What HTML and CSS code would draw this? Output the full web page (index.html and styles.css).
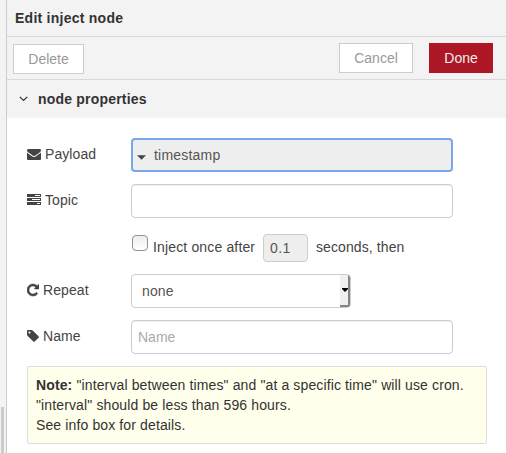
FILE: index.html
```html
<!DOCTYPE html>
<html lang="en">
<head>
<meta charset="utf-8">
<title>Edit inject node</title>
<link rel="stylesheet" href="styles.css">
</head>
<body>
<div class="gutter"><div class="scroll-thumb"></div></div>
<main class="tray">
  <header class="tray-header">Edit inject node</header>
  <div class="toolbar">
    <button class="btn btn-delete">Delete</button>
    <button class="btn btn-cancel">Cancel</button>
    <button class="btn btn-done">Done</button>
  </div>
  <div class="section-header">
    <svg class="chevron" width="9" height="6" viewBox="0 0 9 6"><path d="M.8 .9 4.5 4.5 8.2 .9" fill="none" stroke="currentColor" stroke-width="1.2"/></svg>
    <span>node properties</span>
  </div>
  <form class="form">
    <div class="row">
      <label class="label"><svg class="icon" width="14" height="14" viewBox="0 0 1792 1792"><path d="M1792 710v794q0 66-47 113t-113 47h-1472q-66 0-113-47t-47-113v-794q44 49 101 87 362 246 497 345 57 42 92.500 65.500t94.500 48 110 24.500h2q51 0 110-24.500t94.500-48 92.500-65.500q170-123 498-345 57-39 100-87zm0-294q0 79-49 151t-122 123q-376 261-468 325-10 7-42.500 31t-54 38.500-52 32.500-57.500 27-50 9h-2q-23 0-50-9t-57.500-27-52-32.500-54-38.500-42.500-31q-91-64-262-182.500t-205-142.500q-62-42-117-115.500t-55-136.500q0-78 41.500-130t118.500-52h1472q65 0 112.500 47t47.500 113z"/></svg>Payload</label>
      <div class="field typed"><svg class="caret" width="9" height="5" viewBox="0 0 9 5"><path d="M0 .3h9L4.500 4.800z"/></svg><span>timestamp</span></div>
    </div>
    <div class="row">
      <label class="label"><svg class="icon" width="14" height="14" viewBox="0 0 14 14" shape-rendering="crispEdges"><path fill-rule="evenodd" d="M0 1h14v3H0zM8 2v1h5V2zM0 5h14v3H0zM5 6v1h8V6zM0 9h14v3H0zM10 10v1h3v-1z"/></svg>Topic</label>
      <input class="field" type="text">
    </div>
    <div class="once-row">
      <input class="check" type="checkbox" id="once">
      <label for="once">Inject once after</label>
      <input class="delay" type="text" value="0.1" disabled>
      <span>seconds, then</span>
    </div>
    <div class="row">
      <label class="label"><svg class="icon bold" width="12" height="14" viewBox="128 0 1536 1792"><path d="M1664 256v448q0 26-19 45t-45 19h-448q-42 0-59-40-17-39 14-69l138-138q-148-137-349-137-104 0-198.500 40.500t-163.500 109.500-109.500 163.500-40.500 198.500 40.500 198.500 109.500 163.500 163.500 109.500 198.500 40.500q119 0 225-52t179-147q7-10 23-12 15 0 25 9l137 138q9 8 9.500 20.500t-7.500 22.500q-109 132-264 204.500t-327 72.500q-156 0-298-61t-245-164-164-245-61-298 61-298 164-245 245-164 298-61q147 0 284.500 55.500t244.500 156.500l130-129q29-31 70-14 39 17 39 59z"/></svg>Repeat</label>
      <div class="select"><span>none</span><div class="select-button"><svg width="6" height="4" viewBox="0 0 6 4"><path d="M0 0h6v1L3 4 0 1z"/></svg></div></div>
    </div>
    <div class="row">
      <label class="label"><svg class="icon" width="12" height="14" viewBox="128 0 1536 1792"><path d="M576 448q0-53-37.500-90.500t-90.500-37.500-90.500 37.500-37.500 90.500 37.500 90.500 90.500 37.500 90.500-37.500 37.500-90.500zm1067 576q0 53-37 90l-491 492q-39 37-91 37-53 0-90-37l-715-716q-38-37-64.500-101t-26.500-117v-416q0-52 38-90t90-38h416q53 0 117 26.500t102 64.500l715 714q37 39 37 91z"/></svg>Name</label>
      <input class="field name" type="text" placeholder="Name">
    </div>
    <div class="note"><b>Note:</b> "interval between times" and "at a specific time" will use cron.<br><span class="note-limit">"interval" should be less than 596 hours.</span><br>See info box for details.</div>
  </form>
</main>
</body>
</html>
```
FILE: styles.css
```css
* { box-sizing: border-box; }

body {
  margin: 0;
  height: 453px;
  display: flex;
  overflow: hidden;
  background: #fff;
  color: #444;
  font: 14px/20px "Liberation Sans", Arial, sans-serif;
}

input, button { font: inherit; margin: 0; }

.gutter {
  width: 7px;
  flex: none;
  display: flex;
  align-items: flex-end;
  background: #f3f3f3;
  border-right: 1px solid #ccc;
}

.scroll-thumb {
  width: 3px;
  height: 46px;
  margin-left: 1px;
  background: #ccc;
}

.tray { flex: 1; min-width: 0; }

.tray-header {
  height: 37px;
  padding: 8px;
  background: #f3f3f3;
  border-bottom: 1px solid #d9d9d9;
  color: #333;
  font-weight: bold;
  letter-spacing: .25px;
}

.toolbar {
  height: 43px;
  display: flex;
  padding: 6px 13px 0 6px;
  background: #f3f3f3;
  border-bottom: 1px solid #d9d9d9;
}

.btn {
  height: 30px;
  padding: 0;
  border: 1px solid #ccc;
  background: #fff;
  color: #999;
}

.btn-delete { width: 71px; margin-top: 1px; }
.btn-cancel { width: 74px; margin-left: auto; }

.btn-done {
  width: 64px;
  margin-left: 16px;
  border-color: #ad1625;
  background: #ad1625;
  color: #eee;
}

.section-header {
  height: 38px;
  display: flex;
  align-items: center;
  gap: 10px;
  padding-left: 12px;
  background: #f3f3f3;
  color: #333;
  font-weight: bold;
  letter-spacing: .2px;
}

.form { padding: 20px 19px 0 20px; }

.row {
  height: 34px;
  display: flex;
  margin-bottom: 12px;
}

.label {
  width: 104px;
  height: 32px;
  display: flex;
  align-items: center;
  letter-spacing: .08px;
}

.icon {
  margin-right: 4px;
  fill: currentColor;
}

.icon.bold {
  stroke: currentColor;
  stroke-width: 70px;
}

.field {
  width: 322px;
  height: 34px;
  padding: 0 6px;
  border: 1px solid #ccc;
  border-radius: 4px;
  background: #fff;
  box-shadow: inset 0 1px 1px rgba(0, 0, 0, .075);
  color: #555;
}

.field::placeholder { color: #aaa; opacity: 1; }

.typed {
  display: flex;
  align-items: center;
  padding: 0 4px;
  border: 2px solid #78a8e8;
  background: #eee;
  box-shadow: none;
  letter-spacing: .2px;
}

.caret {
  margin: 4px 8px 0 0;
  fill: #444;
}

.once-row {
  height: 28px;
  display: flex;
  align-items: center;
  margin: 16px 0 12px;
  padding-left: 105px;
}

.check {
  appearance: none;
  width: 16px;
  height: 16px;
  margin: -10px 5px 0 0;
  border: 1px solid #929292;
  border-radius: 4px;
  background: linear-gradient(#eee, #fff);
}

.once-row label {
  width: 102px;
  margin-top: -2px;
  letter-spacing: .15px;
  white-space: nowrap;
}

.once-row span { margin: -2px 0 0 8px; letter-spacing: .1px; }

.delay {
  width: 45px;
  height: 28px;
  margin-left: 8px;
  padding: 0 6px;
  border: 1px solid #ccc;
  border-radius: 4px;
  background: #eee;
  color: #555;
  letter-spacing: .4px;
}

.select {
  width: 220px;
  height: 34px;
  display: flex;
  align-items: center;
  justify-content: space-between;
  padding-left: 10px;
  overflow: hidden;
  border: 1px solid #ccc;
  border-radius: 4px;
  color: #555;
  letter-spacing: .1px;
}

.select-button {
  width: 10px;
  height: 32px;
  display: flex;
  align-items: center;
  justify-content: flex-end;
  border-right: 2px solid #858585;
  border-bottom: 2px solid #858585;
  background: #f0f0f0;
}

.select-button svg { flex: none; fill: #000; }

.note {
  height: 78px;
  padding: 8px;
  border: 1px solid #ddd;
  border-radius: 2px;
  background: #ffffec;
  color: #333;
  white-space: nowrap;
  width: 460px;
  letter-spacing: .125px;
}

.note-limit { letter-spacing: .13px; }
```
